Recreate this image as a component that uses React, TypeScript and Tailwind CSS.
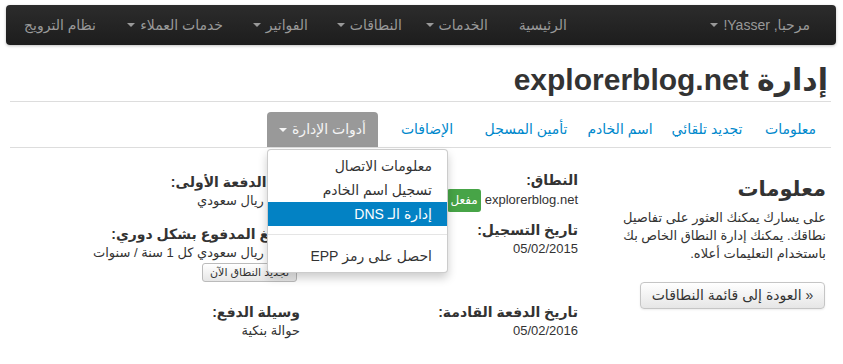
import React from 'react';

const Caret: React.FC<{ light?: boolean }> = ({ light = false }) => (
  <span
    className={
      light
        ? 'inline-block h-0 w-0 border-x-4 border-t-4 border-x-transparent border-t-[#f5f5f5]'
        : 'inline-block h-0 w-0 border-x-4 border-t-4 border-x-transparent border-t-[#999]'
    }
  />
);

const navItems = [
  { label: 'الرئيسية', width: 'w-[47px]', caret: false },
  { label: 'الخدمات', width: 'w-[54px]', caret: true },
  { label: 'النطاقات', width: 'w-[62px]', caret: true },
  { label: 'الفواتير', width: 'w-[53px]', caret: true },
  { label: 'خدمات العملاء', width: 'w-[95px]', caret: true },
  { label: 'نظام الترويج', width: 'w-[67px]', caret: false },
];

const tabs = [
  { label: 'معلومات', width: 'w-[81px]' },
  { label: 'تجديد تلقائي', width: 'w-[86px]' },
  { label: 'اسم الخادم', width: 'w-[88px]' },
  { label: 'تأمين المسجل', width: 'w-[100px]' },
  { label: 'الإضافات', width: 'w-[98px]' },
];

const menuItems = ['معلومات الاتصال', 'تسجيل اسم الخادم', 'إدارة الـ DNS'];

export default function App() {
  return (
    <div
      dir="rtl"
      className="relative h-[364px] w-[843px] overflow-hidden bg-white font-['Liberation_Sans','DejaVu_Sans',sans-serif] text-[#333]"
    >
      {/* top navbar */}
      <nav className="ml-[6px] mr-[7px] mt-[5px] flex h-[40px] items-center rounded-[4px] bg-linear-to-b from-[#2c2c2c] to-[#1d1d1d] pr-[26px] text-[14px] text-[#999] shadow-[0_1px_3px_rgba(0,0,0,0.25)]">
        <div className="flex w-[90px] items-center gap-[5px] whitespace-nowrap">
          <span>مرحبا, Yasser!</span>
          <Caret />
        </div>
        <div className="w-[153px]" />
        <div className="flex items-center gap-[32px]">
          {navItems.map((item) => (
            <div key={item.label} className={`${item.width} flex items-center gap-[5px] whitespace-nowrap`}>
              <span>{item.label}</span>
              {item.caret && <Caret />}
            </div>
          ))}
        </div>
      </nav>

      <div className="ml-[10px] mr-[12px]">
        <h1 className="border-b border-[#ddd] pb-[3px] pr-[3px] pt-[17px] text-[30px] font-bold leading-[36px] text-[#333]">
          إدارة explorerblog.net
        </h1>

        {/* tabs */}
        <ul className="mt-[10px] flex h-[36px] items-end border-b border-[#ddd] text-[14px]">
          {tabs.map((tab) => (
            <li key={tab.label} className={`${tab.width} h-[35px] whitespace-nowrap text-center leading-[35px] text-[#0088cc]`}>
              {tab.label}
            </li>
          ))}
          <li className="relative flex h-[35px] w-[111px] items-center justify-center gap-[5px] whitespace-nowrap rounded-t-[4px] bg-[#999] text-[#f5f5f5]">
            <span>أدوات الإدارة</span>
            <Caret light />
            <div className="absolute left-0 top-full z-10 mt-[2px] w-[181px] rounded-[4px] border border-[rgba(0,0,0,0.2)] bg-white py-[4px] text-[14px] text-[#333] shadow-[0_5px_10px_rgba(0,0,0,0.2)]">
              {menuItems.map((m, i) => (
                <div
                  key={m}
                  className={
                    i === 2
                      ? 'h-[24px] bg-[#0382c4] pr-[15px] text-right leading-[24px] text-white'
                      : 'h-[24px] pr-[15px] text-right leading-[24px]'
                  }
                >
                  {m}
                </div>
              ))}
              <div className="mb-[9px] mt-[8px] h-px bg-[#e5e5e5]" />
              <div className="h-[24px] pr-[15px] text-right leading-[24px]">احصل على رمز EPP</div>
            </div>
          </li>
        </ul>

        {/* main */}
        <div className="flex pr-[5px]">
          <aside className="w-[218px] shrink-0 pt-[26px]">
            <h2 className="text-[21px] font-bold leading-[30px] text-[#333]">معلومات</h2>
            <p className="mt-[5px] whitespace-nowrap text-[13px] leading-[18px]">
              على يسارك يمكنك العثور على تفاصيل
              <br />
              نطاقك. يمكنك إدارة النطاق الخاص بك
              <br />
              باستخدام التعليمات أعلاه.
            </p>
            <button className="mr-px mt-[19px] h-[27px] w-[185px] rounded-[4px] border border-[#c5c5c5] bg-linear-to-b from-white to-[#e6e6e6] text-[14px] text-[#333] shadow-[0_1px_2px_rgba(0,0,0,0.08)]">
              « العودة إلى قائمة النطاقات
            </button>
          </aside>

          <div className="mr-[30px] grid grid-cols-[278px_290px] grid-rows-[50px_82px_auto] pt-[22px] text-[13px]">
            {/* row 1 */}
            <div>
              <h4 className="text-[14px] font-bold leading-[20px]">النطاق:</h4>
              <div className="flex h-[20px] items-center gap-[4px] whitespace-nowrap">
                <span>explorerblog.net</span>
                <span className="flex h-[23px] items-center rounded-[3px] bg-[#47a447] px-[3px] text-[12px] text-white">مفعل</span>
              </div>
            </div>
            <div className="pt-[2px]">
              <h4 className="text-[14px] font-bold leading-[20px]">مبلغ الدفعة الأولى:</h4>
              <div className="whitespace-nowrap leading-[18px]">45.00 ريال سعودي</div>
            </div>

            {/* row 2 */}
            <div>
              <h4 className="text-[14px] font-bold leading-[20px]">تاريخ التسجيل:</h4>
              <div className="leading-[18px]">05/02/2015</div>
            </div>
            <div className="pt-[4px]">
              <h4 className="whitespace-nowrap text-[14px] font-bold leading-[20px]">المبلغ المدفوع بشكل دوري:</h4>
              <div className="whitespace-nowrap leading-[18px]">45.00 ريال سعودي كل 1 سنة / سنوات</div>
              <button className="mr-[3px] h-[19px] w-[95px] rounded-[3px] border border-[#bbb] bg-linear-to-b from-white to-[#e6e6e6] text-[11px] leading-[17px] text-[#333]">
                تجديد النطاق الآن
              </button>
            </div>

            {/* row 3 */}
            <div>
              <h4 className="text-[14px] font-bold leading-[20px]">تاريخ الدفعة القادمة:</h4>
              <div className="leading-[18px]">05/02/2016</div>
            </div>
            <div>
              <h4 className="text-[14px] font-bold leading-[20px]">وسيلة الدفع:</h4>
              <div className="leading-[18px]">حوالة بنكية</div>
            </div>
          </div>
        </div>
      </div>
    </div>
  );
}
